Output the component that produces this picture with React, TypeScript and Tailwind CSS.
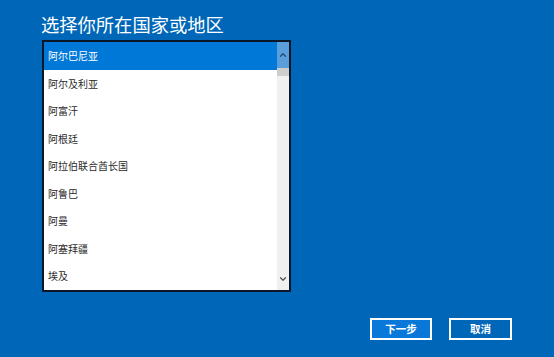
import { ChevronDown, ChevronUp } from 'lucide-react';

const countries = [
  '阿尔巴尼亚',
  '阿尔及利亚',
  '阿富汗',
  '阿根廷',
  '阿拉伯联合酋长国',
  '阿鲁巴',
  '阿曼',
  '阿塞拜疆',
  '埃及',
];

const font = { fontFamily: '"Noto Sans CJK SC", "Noto Sans", sans-serif' };

export default function App() {
  return (
    <div
      className="w-[554px] h-[357px] bg-[#0067b8] flex flex-col pl-[42px] pr-[42px] pt-[11px] overflow-hidden"
      style={font}
    >
      <h1 className="text-[18.3px] leading-[26px] font-normal text-white -ml-[1px]">选择你所在国家或地区</h1>

      {/* 国家列表 */}
      <div className="mt-[3px] w-[249px] h-[252px] border-2 border-[#0b1629] bg-white flex">
        <ul className="flex-1 flex flex-col">
          {countries.map((name, i) => (
            <li
              key={name}
              className={
                'h-[27.5px] flex items-center pl-[4px] text-[10px] ' +
                (i === 0 ? 'bg-[#0078d7] text-white' : 'text-[#2a2a2a]')
              }
            >
              {name}
            </li>
          ))}
        </ul>

        {/* 滚动条 */}
        <div className="w-[12px] flex flex-col bg-[#f0f0f0]">
          <div className="h-[26px] bg-[#5a9fdc] flex items-center justify-center">
            <ChevronUp className="w-[10px] h-[10px] text-[#2a4a6a]" strokeWidth={3} />
          </div>
          <div className="h-[8px] bg-[#cdcdcd]" />
          <div className="flex-1" />
          <div className="h-[22px] flex items-center justify-center">
            <ChevronDown className="w-[10px] h-[10px] text-[#555]" strokeWidth={3} />
          </div>
        </div>
      </div>

      {/* 按钮 */}
      <div className="mt-[26px] flex justify-end gap-[17px]">
        <button className="w-[62px] h-[22px] border-2 border-white bg-[#0a78d8] text-white text-[10.5px] font-bold flex items-center justify-center">
          下一步
        </button>
        <button className="w-[63px] h-[22px] border-2 border-white bg-[#0067b8] text-white text-[10.5px] font-bold flex items-center justify-center">
          取消
        </button>
      </div>
    </div>
  );
}
